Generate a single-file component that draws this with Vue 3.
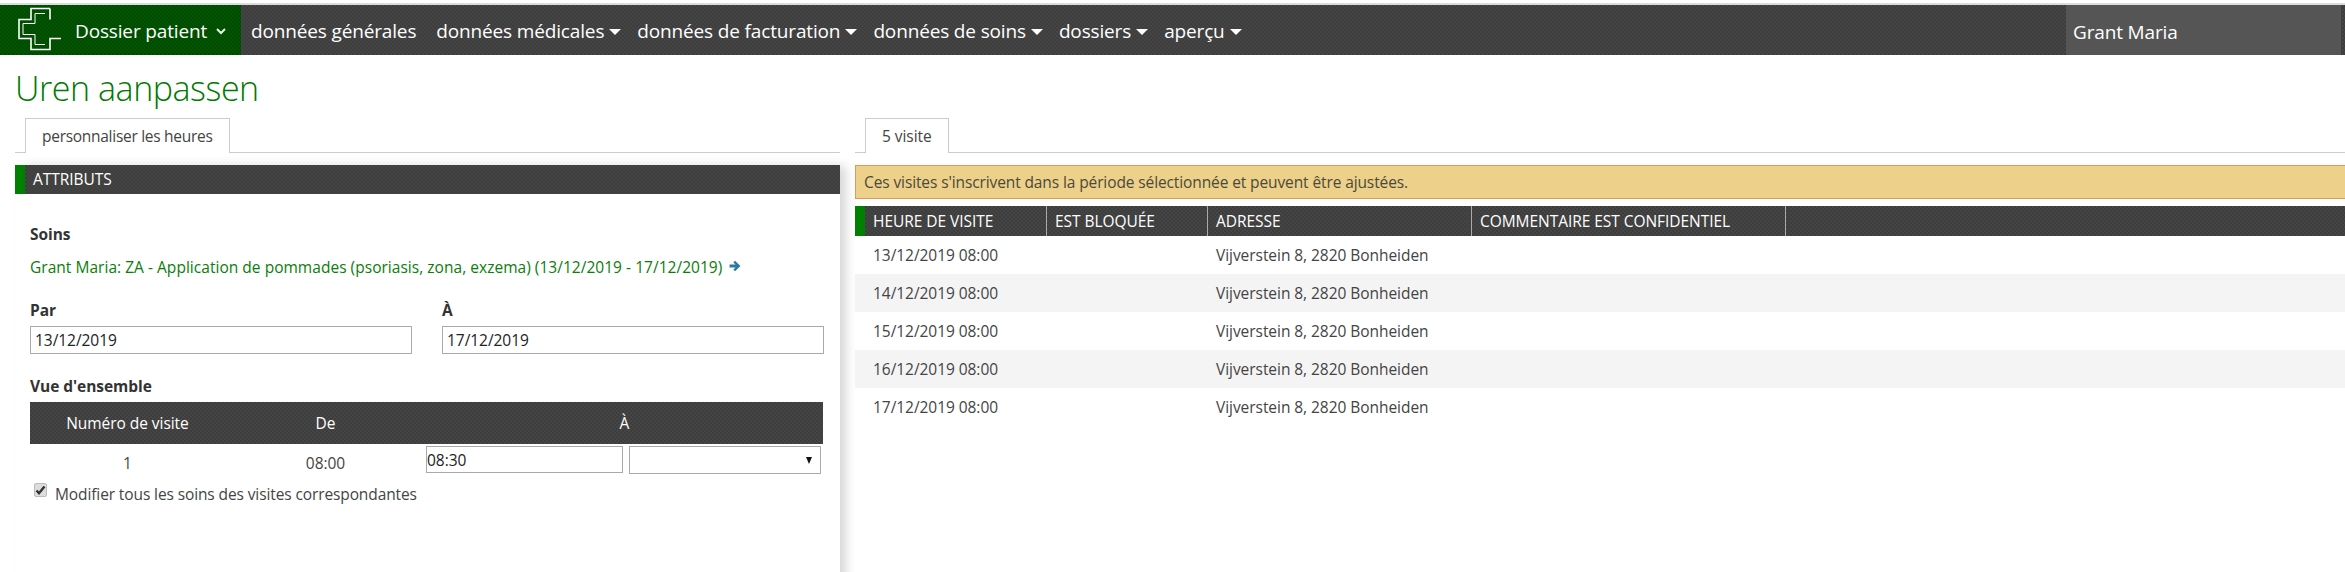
<script setup>
const navItems = [
  { label: 'données générales', caret: false },
  { label: 'données médicales', caret: true },
  { label: 'données de facturation', caret: true },
  { label: 'données de soins', caret: true },
  { label: 'dossiers', caret: true },
  { label: 'aperçu', caret: true }
]
const columns = ['HEURE DE VISITE', 'EST BLOQUÉE', 'ADRESSE', 'COMMENTAIRE EST CONFIDENTIEL', '']
const visits = ['13/12/2019 08:00', '14/12/2019 08:00', '15/12/2019 08:00', '16/12/2019 08:00', '17/12/2019 08:00']
</script>

<template>
  <div class="page">
    <div class="topline"></div>
    <header class="navbar">
      <div class="brand">
        <svg class="logo" width="62" height="50" viewBox="0 0 62 50" fill="none" stroke="#fff">
          <path stroke-width="1.6" d="M50 3.500H31V14.500H19V33.500H31V44.500H50V33.500H61M50 3.500V14.500" />
          <path stroke-width="1" d="M45 8.500H35V18.500H23V29.500H35V39.500H45" />
        </svg>
        <span class="brand-text">Dossier patient</span>
        <svg class="chevron" width="10" height="7" viewBox="0 0 10 7" fill="none" stroke="#e8efe8" stroke-width="2">
          <path d="M1 1l4 4 4-4" />
        </svg>
      </div>
      <nav class="menu">
        <div v-for="item in navItems" :key="item.label" class="menu-item" :class="{ plain: !item.caret }">
          <span>{{ item.label }}</span>
          <i v-if="item.caret" class="caret"></i>
        </div>
      </nav>
      <div class="user">Grant Maria</div>
    </header>

    <h1 class="title">Uren aanpassen</h1>

    <main class="columns">
      <section class="left">
        <div class="tabs"><div class="tab tab-long">personnaliser les heures</div></div>
        <div class="panel">
          <div class="bar">ATTRIBUTS</div>
          <div class="panel-body">
            <div class="label soins">Soins</div>
            <div class="link-row">
              <a class="link">Grant Maria: ZA - Application de pommades (psoriasis, zona, exzema) (13/12/2019 - 17/12/2019)</a>
              <svg class="arrow" width="12" height="12" viewBox="0 0 11 11">
                <path fill="#2b7a9f" d="M5.500 .8L10.500 5.500 5.500 10.200 4 8.700 6 6.800H.5V4.200H6L4 2.300z" />
              </svg>
            </div>
            <div class="dates">
              <label class="date-field">
                <span class="label">Par</span>
                <input class="input" value="13/12/2019" />
              </label>
              <label class="date-field">
                <span class="label">À</span>
                <input class="input" value="17/12/2019" />
              </label>
            </div>
            <div class="label overview">Vue d'ensemble</div>
            <div class="ov-table">
              <div class="ov-head">
                <span class="c1">Numéro de visite</span>
                <span class="c2">De</span>
                <span class="c3">À</span>
              </div>
              <div class="ov-row">
                <span class="c1">1</span>
                <span class="c2">08:00</span>
                <div class="c3 time-cell">
                  <input class="input time" value="08:30" />
                  <div class="select"><i class="select-arrow"></i></div>
                </div>
              </div>
            </div>
            <label class="check-row">
              <span class="check">
                <svg width="11" height="10" viewBox="0 0 11 10" fill="none" stroke="#333" stroke-width="2.400">
                  <path d="M1.500 5.500L4 8.200 9.500 1.500" />
                </svg>
              </span>
              <span class="check-text">Modifier tous les soins des visites correspondantes</span>
            </label>
          </div>
        </div>
      </section>

      <section class="right">
        <div class="tabs"><div class="tab">5 visite</div></div>
        <div class="alert">Ces visites s'inscrivent dans la période sélectionnée et peuvent être ajustées.</div>
        <table class="visits">
          <thead>
            <tr>
              <th v-for="(col, i) in columns" :key="i">{{ col }}</th>
            </tr>
          </thead>
          <tbody>
            <tr v-for="visit in visits" :key="visit">
              <td>{{ visit }}</td>
              <td></td>
              <td>Vijverstein 8, 2820 Bonheiden</td>
              <td></td>
              <td></td>
            </tr>
          </tbody>
        </table>
      </section>
    </main>
  </div>
</template>

<style>
html, body { margin: 0; background: #fff; overflow: hidden; }
</style>

<style scoped>
.page {
  width: 2345px;
  height: 572px;
  overflow: hidden;
  font-family: "Open Sans", "Noto Sans", sans-serif;
  color: #444;
  font-size: 15.500px;
  letter-spacing: -0.05px;
}
.topline { height: 2px; margin-top: 3px; background: #dcdce0; }
.navbar {
  display: flex;
  height: 50px;
  background: #404040 conic-gradient(#454545 25%, #3d3d3d 0 50%, #454545 0 75%, #3d3d3d 0) 0 0 / 4px 4px;
  color: #fff;
  font-size: 19px;
  letter-spacing: -0.15px;
}
.brand {
  display: flex;
  align-items: center;
  width: 241px;
  flex: none;
  background: #004f00 conic-gradient(#005500 25%, #004a00 0 50%, #005500 0 75%, #004a00 0) 0 0 / 4px 4px;
}
.logo { flex: none; }
.brand-text { margin-left: 13px; padding-top: 2px; }
.chevron { margin-left: 9px; margin-top: 2px; }
.menu { display: flex; align-items: center; margin-left: 10px; gap: 16px; padding-top: 2px; }
.menu-item { display: flex; align-items: center; gap: 5px; }
.menu-item.plain { padding-right: 4px; }
.caret {
  width: 0;
  height: 0;
  border-left: 6px solid transparent;
  border-right: 6px solid transparent;
  border-top: 6px solid #fff;
  margin-top: 1px;
}
.user {
  margin-left: auto;
  margin-right: 4px;
  width: 268px;
  padding: 4px 0 0 7px;
  display: flex;
  align-items: center;
  background: #555;
}
.title {
  margin: 13px 0 0 15px;
  height: 50px;
  line-height: 40px;
  font-size: 34px;
  font-weight: 300;
  letter-spacing: -0.45px;
  color: #007a00;
}
.columns { display: flex; }
.left { width: 825px; margin-left: 15px; flex: none; }
.right { flex: 1; margin-left: 15px; }
.tabs { height: 34px; padding-left: 10px; border-bottom: 1px solid #ccc; }
.tab {
  display: inline-block;
  height: 35px;
  box-sizing: border-box;
  padding: 0 16px;
  line-height: 34px;
  background: #fff;
  border: 1px solid #ccc;
  border-bottom: 0;
}
.tab-long { letter-spacing: -0.28px; }
.panel {
  margin-top: 12px;
  height: 420px;
  box-shadow: 7px 0 10px -1px rgba(0, 0, 0, 0.16);
  background: #fff;
}
.bar {
  height: 29px;
  box-sizing: border-box;
  padding-left: 8px;
  line-height: 29px;
  border-left: 10px solid #008000;
  background: #404040 conic-gradient(#454545 25%, #3d3d3d 0 50%, #454545 0 75%, #3d3d3d 0) 0 0 / 4px 4px;
  color: #fff;
}
.panel-body { padding: 30px 16px 0 15px; }
.label { display: block; font-weight: 700; color: #333; line-height: 20px; }
.link-row { display: flex; align-items: center; gap: 7px; margin-top: 13px; height: 20px; }
.link { color: #0a7d0a; letter-spacing: 0.03px; }
.arrow { flex: none; margin-bottom: 3px; }
.dates { display: flex; gap: 30px; margin-top: 23px; }
.date-field { display: block; width: 382px; }
.input {
  display: block;
  box-sizing: border-box;
  width: 100%;
  height: 28px;
  margin-top: 6px;
  padding: 0 4px;
  border: 1px solid #aaa;
  border-radius: 0;
  outline: 0;
  background: #fff;
  font: inherit;
  letter-spacing: inherit;
  color: #222;
}
.overview { margin-top: 22px; }
.ov-table { margin-top: 6px; width: 793px; }
.ov-head, .ov-row { display: flex; align-items: center; text-align: center; }
.ov-head {
  height: 42px;
  background: #404040 conic-gradient(#454545 25%, #3d3d3d 0 50%, #454545 0 75%, #3d3d3d 0) 0 0 / 4px 4px;
  color: #fff;
}
.ov-row { height: 38px; align-items: flex-start; padding-top: 2px; box-sizing: border-box; }
.ov-row .c1, .ov-row .c2 { line-height: 34px; }
.c1 { width: 195px; }
.c2 { width: 201px; }
.c3 { flex: 1; }
.time-cell { display: flex; gap: 6px; }
.time { width: 197px; height: 27px; margin: 0; padding: 0; }
.select {
  position: relative;
  width: 192px;
  height: 28px;
  box-sizing: border-box;
  border: 1px solid #aaa;
}
.select-arrow {
  position: absolute;
  right: 8px;
  top: 10px;
  border-left: 3.500px solid transparent;
  border-right: 3.500px solid transparent;
  border-top: 7px solid #111;
}
.check-row { display: flex; align-items: flex-start; margin: 0 0 0 4px; line-height: 24px; }
.check-text { letter-spacing: -0.11px; }
.check {
  display: flex;
  align-items: center;
  justify-content: center;
  width: 13px;
  height: 14px;
  margin: 1px 8px 0 0;
  flex: none;
  box-sizing: border-box;
  border: 1px solid #bbb;
  border-radius: 2px;
  background: #ddd;
}
.alert {
  margin-top: 12px;
  height: 34px;
  box-sizing: border-box;
  padding-left: 8px;
  line-height: 32px;
  letter-spacing: -0.11px;
  border: 1px solid #df9a58;
  border-right: 0;
  background: #edd08a;
  color: #4a4a3a;
}
.visits {
  width: 100%;
  margin-top: 7px;
  border-collapse: separate;
  border-spacing: 0;
  table-layout: fixed;
}
.visits th {
  height: 30px;
  padding: 0 0 0 8px;
  box-sizing: border-box;
  text-align: left;
  font-weight: 400;
  color: #fff;
  background: #404040 conic-gradient(#454545 25%, #3d3d3d 0 50%, #454545 0 75%, #3d3d3d 0) 0 0 / 4px 4px;
  border-right: 1px solid #aaa;
}
.visits th:first-child { width: 192px; border-left: 10px solid #008000; }
.visits th:nth-child(2) { width: 161px; }
.visits th:nth-child(3) { width: 264px; }
.visits th:nth-child(4) { width: 314px; }
.visits th:last-child { border-right: 0; }
.visits td { height: 38px; padding: 0 0 0 8px; box-sizing: border-box; }
.visits td:first-child { padding-left: 18px; }
.visits tbody tr:nth-child(even) td { background: #f4f4f4; }
</style>
